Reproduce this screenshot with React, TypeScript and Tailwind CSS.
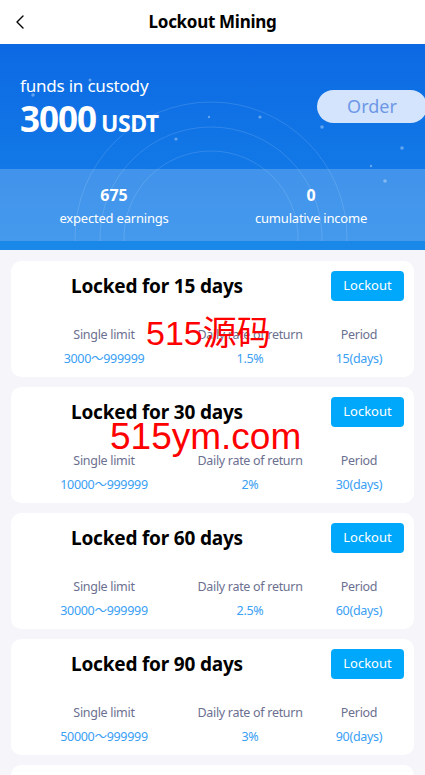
import { ChevronLeft } from 'lucide-react';

const plans = [
  { days: 15, limit: '3000～999999', rate: '1.5%' },
  { days: 30, limit: '10000～999999', rate: '2%' },
  { days: 60, limit: '30000～999999', rate: '2.5%' },
  { days: 90, limit: '50000～999999', rate: '3%' },
  { days: 180, limit: '100000～999999', rate: '3.5%' },
];

const Banner = () => {
  return (
    <div className="relative overflow-hidden bg-gradient-to-b from-[#0d69e3] to-[#1782e9]">
      {/* circles + dots */}
      <svg className="absolute inset-0 pointer-events-none" width="425" height="206" viewBox="0 44 425 206">
        <g fill="none" stroke="#ffffff" strokeOpacity="0.13" strokeWidth="1">
          <circle cx="211" cy="238" r="136" />
          <circle cx="211" cy="238" r="111" />
          <circle cx="211" cy="238" r="87" />
        </g>
        <g fill="#ffffff" fillOpacity="0.35">
          <circle cx="33" cy="95" r="1.8" />
          <circle cx="90" cy="80" r="1.5" />
          <circle cx="209" cy="117" r="1.2" />
          <circle cx="260" cy="117" r="1.6" />
          <circle cx="176" cy="139" r="1.6" />
          <circle cx="322" cy="127" r="1.8" />
          <circle cx="402" cy="148" r="1.8" />
          <circle cx="371" cy="166" r="1.2" />
          <circle cx="385" cy="181" r="1.8" />
        </g>
      </svg>
      <div className="relative flex items-start justify-between h-[125px] pt-[31px]">
        <div className="pl-[20px] text-white">
          <p className="text-[17px] leading-[22px] tracking-[-0.2px]">funds in custody</p>
          <p className="flex items-baseline mt-[2px]">
            <span className="text-[35px] font-bold leading-[40px] tracking-[-1px]">3000</span>
            <span className="text-[23px] font-bold ml-[5px] tracking-[-0.5px]">USDT</span>
          </p>
        </div>
        <button className="mt-[15px] w-[110px] h-[33px] rounded-full bg-[#d3e4fc] text-[#6e98e6] text-[18px] -mr-[2px]">
          Order
        </button>
      </div>
      <div className="relative flex h-[72px] bg-[#ffffff]/20 text-white">
        <div className="w-[228px] flex flex-col items-center pt-[15px]">
          <span className="text-[16px] font-bold leading-[22px]">675</span>
          <span className="text-[13px] leading-[18px] mt-[3px] tracking-[-0.2px]">expected earnings</span>
        </div>
        <div className="w-[166px] flex flex-col items-center pt-[15px]">
          <span className="text-[16px] font-bold leading-[22px]">0</span>
          <span className="text-[13px] leading-[18px] mt-[3px] tracking-[-0.2px]">cumulative income</span>
        </div>
      </div>
      <div className="relative h-[9px] bg-[#1988e9]" />
    </div>
  );
};

const PlanCard = ({ days, limit, rate }: { days: number; limit: string; rate: string }) => {
  return (
    <div className="bg-white rounded-[10px] h-[116px] pt-[10px]">
      <div className="flex items-center justify-between pr-[10px]">
        <h2 className="pl-[60px] text-[19px] font-bold text-black tracking-[-0.2px]">Locked for {days} days</h2>
        <button className="w-[73px] h-[30px] rounded-[4px] bg-[#00a8fb] text-white text-[13px]">Lockout</button>
      </div>
      <div className="flex mt-[25px] text-[12.5px] leading-[18px] tracking-[-0.3px] whitespace-nowrap">
        <div className="ml-[39px] w-[108px] flex flex-col items-center">
          <span className="text-[#6c7090]">Single limit</span>
          <span className="text-[#3aa0f4] mt-[6px]">{limit}</span>
        </div>
        <div className="ml-[38px] w-[108px] flex flex-col items-center">
          <span className="text-[#6c7090]">Daily rate of return</span>
          <span className="text-[#3aa0f4] mt-[6px]">{rate}</span>
        </div>
        <div className="ml-[19px] w-[72px] flex flex-col items-center">
          <span className="text-[#6c7090]">Period</span>
          <span className="text-[#3aa0f4] mt-[6px]">{days}(days)</span>
        </div>
      </div>
    </div>
  );
};

export default function App() {
  return (
    <div
      className="relative w-[425px] h-[775px] overflow-hidden bg-[#f5f5fa]"
      style={{ fontFamily: '"Noto Sans", "Noto Sans CJK SC", sans-serif' }}
    >
      <div className="relative h-[44px] bg-white flex items-center justify-center">
        <ChevronLeft className="absolute left-[8px] top-[10px] text-black" size={24} strokeWidth={1.4} />
        <h1 className="text-[17px] font-bold text-black tracking-[-0.3px]">Lockout Mining</h1>
      </div>
      <Banner />
      <div className="flex flex-col gap-[10px] px-[11px] pt-[11px]">
        {plans.map((p) => (
          <PlanCard key={p.days} {...p} />
        ))}
      </div>

      {/* watermark */}
      <span
        className="absolute left-[146px] top-[310px] text-[34px] leading-[46px] text-[#ff0000] pointer-events-none"
        style={{ fontFamily: '"Liberation Sans", "Noto Sans CJK SC", sans-serif' }}
      >
        515源码
      </span>
      <span
        className="absolute left-[110px] top-[413px] text-[37px] leading-[48px] text-[#ff0000] pointer-events-none"
        style={{ fontFamily: '"Liberation Sans", "Noto Sans CJK SC", sans-serif' }}
      >
        515ym.com
      </span>
    </div>
  );
}
